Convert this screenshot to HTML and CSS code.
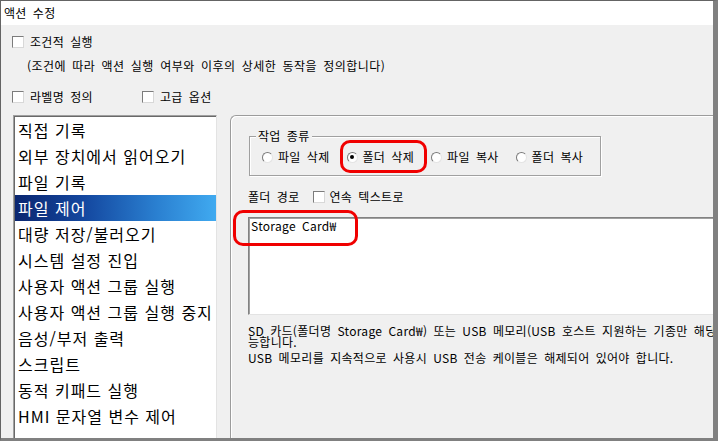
FILE: index.html
```html
<!DOCTYPE html>
<html lang="ko">
<head>
<meta charset="utf-8">
<title>액션 수정</title>
<link rel="stylesheet" href="styles.css">
</head>
<body>
<div class="frame">
  <div class="titlebar">액션 수정</div>
  <div class="content">
    <div class="row row-first">
      <label class="opt"><span class="check"></span><span class="opt-text">조건적 실행</span></label>
    </div>
    <div class="row desc">(조건에 따라 액션 실행 여부와 이후의 상세한 동작을 정의합니다)</div>
    <div class="row row-third">
      <label class="opt opt-wide"><span class="check"></span><span class="opt-text">라벨명 정의</span></label>
      <label class="opt"><span class="check"></span><span class="opt-text">고급 옵션</span></label>
    </div>
    <div class="main">
      <ul class="list">
        <li>직접 기록</li>
        <li>외부 장치에서 읽어오기</li>
        <li>파일 기록</li>
        <li class="selected">파일 제어</li>
        <li>대량 저장/불러오기</li>
        <li>시스템 설정 진입</li>
        <li>사용자 액션 그룹 실행</li>
        <li>사용자 액션 그룹 실행 중지</li>
        <li>음성/부저 출력</li>
        <li>스크립트</li>
        <li>동적 키패드 실행</li>
        <li>HMI 문자열 변수 제어</li>
      </ul>
      <div class="panel">
        <div class="group">
          <span class="legend">작업 종류</span>
          <div class="radios">
            <span class="radio-item"><span class="radio"></span>파일 삭제</span>
            <span class="radio-item"><span class="radio on"></span>폴더 삭제</span>
            <span class="radio-item"><span class="radio"></span>파일 복사</span>
            <span class="radio-item"><span class="radio"></span>폴더 복사</span>
          </div>
        </div>
        <div class="path-row">
          <span>폴더 경로</span>
          <span class="check path-check"></span>
          <span class="opt-text-small">연속 텍스트로</span>
        </div>
        <div class="textbox">Storage Card₩</div>
        <div class="note">
          <div class="note-line tight">SD 카드(폴더명 Storage Card₩) 또는 USB 메모리(USB 호스트 지원하는 기종만 해당 가</div>
          <div class="note-line tight">능합니다.</div>
          <div class="note-line second">USB 메모리를 지속적으로 사용시 USB 전송 케이블은 해제되어 있어야 합니다.</div>
        </div>
        <div class="mark mark-radio"></div>
        <div class="mark mark-path"></div>
      </div>
    </div>
  </div>
</div>
</body>
</html>
```
FILE: styles.css
```css
html, body {
  margin: 0;
  padding: 0;
  background: #808080;
}
body {
  font-family: "Noto Sans CJK KR", "Noto Sans", sans-serif;
  font-size: 12px;
  letter-spacing: 0.3px;
  word-spacing: 2.5px;
  color: #000;
}
.frame {
  width: 718px;
  height: 441px;
  box-sizing: border-box;
  border-top: 1px solid #646464;
  border-left: 1px solid #646464;
  border-right: 5px solid #808080;
  border-bottom: 3px solid #808080;
  background: #f0f0f0;
  overflow: hidden;
  display: flex;
  flex-direction: column;
}
.titlebar {
  height: 24px;
  line-height: 24px;
  background: #fff;
  padding-left: 3px;
  flex: none;
}
.content {
  flex: 1;
  display: flex;
  flex-direction: column;
  min-height: 0;
}
.row {
  height: 18px;
  line-height: 18px;
  display: flex;
  align-items: center;
  flex: none;
  white-space: nowrap;
}
.row-first {
  margin-top: 8px;
  padding-left: 11px;
}
.desc {
  margin-top: 6px;
  padding-left: 26px;
  letter-spacing: 0.45px;
}
.row-third {
  margin-top: 13px;
  padding-left: 11px;
}
.opt {
  display: flex;
  align-items: center;
}
.opt-wide {
  width: 130px;
}
.check {
  width: 12px;
  height: 12px;
  box-sizing: border-box;
  background: #fff;
  border: 1px solid;
  border-color: #7c7c7c #d8d8d8 #d8d8d8 #7c7c7c;
  flex: none;
}
.opt-text {
  margin-left: 6px;
}
.main {
  margin-top: 9px;
  display: flex;
  align-items: flex-start;
  flex: none;
}
.list {
  list-style: none;
  margin: 0 0 0 12px;
  padding: 1px 0 0 0;
  width: 204px;
  height: 340px;
  box-sizing: border-box;
  background: #fff;
  border: 1px solid;
  border-color: #a0a0a0 #e3e3e3 #e3e3e3 #a0a0a0;
  box-shadow: inset 1px 1px 0 #696969;
  font-size: 16px;
  letter-spacing: 1px;
  word-spacing: 0;
  flex: none;
}
.list li {
  height: 26px;
  line-height: 26px;
  padding-left: 4px;
  white-space: nowrap;
}
.list li.selected {
  color: #fff;
  margin-left: 1px;
  padding-left: 3px;
  background: linear-gradient(to right, #0a2670 0%, #1448a0 35%, #2a7fd0 70%, #40aaf0 100%);
}
.panel {
  position: relative;
  margin-left: 13px;
  width: 520px;
  height: 340px;
  box-sizing: border-box;
  flex: none;
  border-top: 1px solid #9c9c9c;
  border-left: 1px solid #9c9c9c;
  border-top-left-radius: 6px;
  box-shadow: inset 1px 1px 0 #fff;
  padding-top: 20px;
}
.group {
  position: relative;
  margin-left: 18px;
  width: 352px;
  height: 40px;
  box-sizing: border-box;
  border: 1px solid #a0a0a0;
  box-shadow: 1px 1px 0 #fff, inset 1px 1px 0 #fff;
}
.legend {
  position: absolute;
  top: -9px;
  left: 6px;
  padding: 0 2px;
  line-height: 16px;
  background: #f0f0f0;
}
.radios {
  display: flex;
  align-items: center;
  height: 16px;
  padding: 12px 0 0 12px;
  white-space: nowrap;
}
.radio-item {
  display: flex;
  align-items: center;
  margin-right: 17px;
  line-height: 16px;
}
.radio {
  width: 11px;
  height: 11px;
  box-sizing: border-box;
  border-radius: 50%;
  border: 1px solid;
  border-color: #7a7a7a #e4e4e4 #e4e4e4 #7a7a7a;
  background: #fff;
  margin-right: 5px;
  position: relative;
  flex: none;
}
.radio.on::after {
  content: "";
  position: absolute;
  left: 2.5px;
  top: 2.5px;
  width: 4px;
  height: 4px;
  border-radius: 50%;
  background: #000;
}
.path-row {
  margin-top: 12px;
  margin-left: 17px;
  height: 18px;
  line-height: 18px;
  display: flex;
  align-items: center;
  white-space: nowrap;
}
.path-check {
  margin-left: 13px;
}
.opt-text-small {
  margin-left: 5px;
}
.textbox {
  margin-top: 11px;
  margin-left: 17px;
  height: 98px;
  box-sizing: border-box;
  background: #fff;
  border: 1px solid;
  border-color: #828282 #e3e3e3 #e3e3e3 #828282;
  box-shadow: inset 1px 1px 0 #a0a0a0;
  padding: 1px 2px;
  line-height: 14px;
}
.note {
  margin-top: 10px;
  margin-left: 17px;
  white-space: nowrap;
}
.note-line.tight {
  height: 11px;
  line-height: 11px;
}
.note-line.second {
  margin-top: 4px;
  height: 14px;
  line-height: 14px;
}
.mark {
  position: absolute;
  box-sizing: border-box;
  border: 3px solid #f00000;
  border-radius: 10px;
}
.mark-radio {
  left: 109px;
  top: 24px;
  width: 87px;
  height: 33px;
}
.mark-path {
  left: 2px;
  top: 94px;
  width: 125px;
  height: 36px;
}
```
